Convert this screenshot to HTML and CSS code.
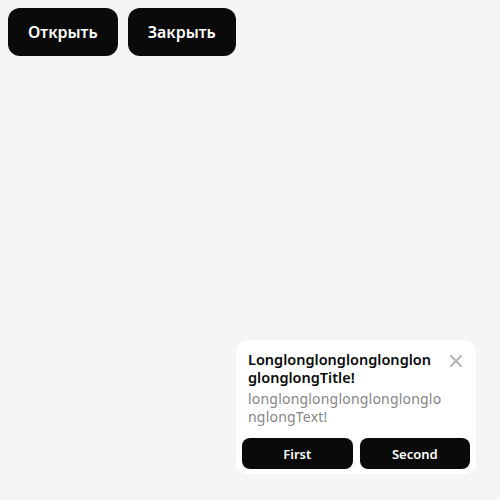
FILE: index.html
```html
<!DOCTYPE html>
<html lang="ru">
<head>
<meta charset="utf-8">
<link rel="stylesheet" href="styles.css">
</head>
<body>
<div class="toolbar">
  <button class="btn">Открыть</button>
  <button class="btn">Закрыть</button>
</div>
<div class="snackbar">
  <div class="snack-head">
    <div class="snack-texts">
      <div class="snack-title">LonglonglonglonglonglonglonglongTitle!</div>
      <div class="snack-text">longlonglonglonglonglonglonglongText!</div>
    </div>
    <button class="snack-close" aria-label="close">
      <svg width="12" height="12" viewBox="0 0 12 12"><path d="M1 1L11 11M11 1L1 11" stroke="#b5b5b5" stroke-width="2" stroke-linecap="square"/></svg>
    </button>
  </div>
  <div class="snack-actions">
    <button class="sbtn">First</button>
    <button class="sbtn">Second</button>
  </div>
</div>
</body>
</html>
```
FILE: styles.css
```css
html, body {
  margin: 0;
  padding: 0;
  background: #f5f5f5;
  height: 100%;
}
body {
  font-family: "Noto Sans", "Open Sans", sans-serif;
  position: relative;
}
.toolbar {
  display: flex;
  gap: 10px;
  padding: 8px;
}
.btn {
  background: #0a0a0a;
  color: #fff;
  border: none;
  border-radius: 12px;
  height: 48px;
  padding: 0 20px;
  font-family: inherit;
  font-size: 16px;
  font-weight: 600;
}
.snackbar {
  position: absolute;
  left: 236px;
  top: 340px;
  width: 240px;
  box-sizing: border-box;
  background: #fff;
  border-radius: 12px;
  padding: 10px 6px 5px 6px;
}
.snack-head {
  display: flex;
  align-items: flex-start;
  padding: 0 6px;
}
.snack-texts {
  width: 194px;
  word-break: break-all;
}
.snack-title {
  font-size: 14.5px;
  font-weight: 600;
  line-height: 18px;
  color: #0a0a0a;
  padding-right: 6px;
}
.snack-text {
  font-size: 14px;
  line-height: 18px;
  letter-spacing: 0.2px;
  color: #858585;
  margin-top: 4px;
}
.snack-close {
  margin-left: auto;
  background: none;
  border: none;
  padding: 0;
  width: 12px;
  height: 12px;
  margin-top: 5px;
  margin-right: 2px;
  display: flex;
}
.snack-actions {
  display: flex;
  gap: 7px;
  margin-top: 12px;
}
.sbtn {
  flex: 1;
  height: 31px;
  background: #0a0a0a;
  color: #fff;
  border: none;
  border-radius: 8px;
  font-family: inherit;
  font-size: 13px;
  font-weight: 600;
}
```
